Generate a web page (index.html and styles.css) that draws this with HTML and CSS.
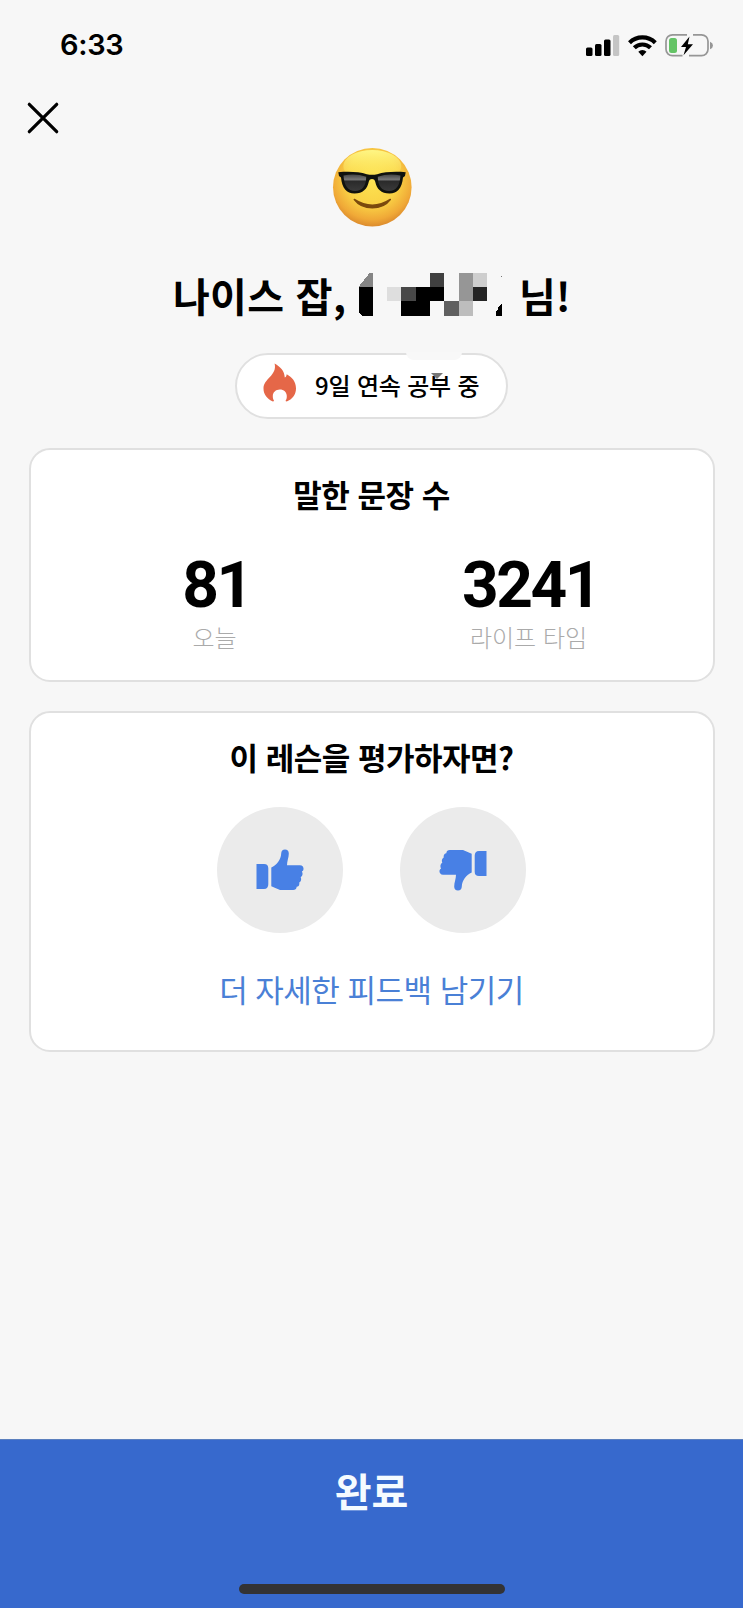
FILE: index.html
```html
<!DOCTYPE html>
<html lang="ko">
<head>
  <meta charset="UTF-8">
  <title>레슨 완료</title>
  <link rel="stylesheet" href="styles.css">
</head>
<body>
  <div class="status">
    <span class="time">6:33</span>
    <svg class="status-icons" viewBox="0 0 130 26" width="130" height="26">
      <rect x="1" y="15.500" width="6.500" height="8.500" rx="1.500"/>
      <rect x="10" y="12" width="6.500" height="12" rx="1.500"/>
      <rect x="19" y="7.500" width="6.500" height="16.500" rx="1.500"/>
      <rect x="28" y="3" width="6.200" height="21" rx="1.500" fill="#c5c5c5"/>
      <g fill="none" stroke="#000" stroke-width="4.200">
        <path d="M44.500 10.700a18.500 18.500 0 0 1 25.800 0"/>
        <path d="M49.300 15.800a11.600 11.600 0 0 1 16.200 0"/>
      </g>
      <path d="M53.300 19.700a6 6 0 0 1 8.200 0l-4.100 4.600z"/>
      <path d="M102 2.800h-14.500a6.500 6.500 0 0 0-6.500 6.500v7.900a6.500 6.500 0 0 0 6.500 6.500h10M108 2.800h8.500a6.500 6.500 0 0 1 6.500 6.500v7.900a6.500 6.500 0 0 1-6.500 6.500h-12.500" fill="none" stroke="#969696" stroke-width="1.700"/>
      <path d="M125 9.800q3 1.200 3 3.700t-3 3.700z" fill="#969696"/>
      <rect x="84" y="6" width="8" height="15" rx="2.500" fill="#64c466"/>
      <path d="M104.500 4.500L96 15h5l-2.500 8.300L108 12.300h-5.200z"/>
    </svg>
  </div>

  <button class="close">
    <svg viewBox="0 0 32 32" width="32" height="32"><path d="M2.300 2.300l27.400 27.400M29.700 2.300L2.300 29.700" fill="none" stroke="#000" stroke-width="3.200" stroke-linecap="round"/></svg>
  </button>

  <svg class="emoji" viewBox="0 0 80 80" width="80" height="80">
    <defs>
      <radialGradient id="face" cx=".5" cy=".4" r=".6">
        <stop offset="0" stop-color="#fde352"/>
        <stop offset=".55" stop-color="#fad245"/>
        <stop offset=".85" stop-color="#f0a937"/>
        <stop offset="1" stop-color="#dc8b2d"/>
      </radialGradient>
      <linearGradient id="shine" x1="0" y1="0" x2="0" y2="1">
        <stop offset="0" stop-color="#fffb8c" stop-opacity=".9"/>
        <stop offset="1" stop-color="#ffed63" stop-opacity="0"/>
      </linearGradient>
      <linearGradient id="lens" x1="0" y1="0" x2="0" y2="1">
        <stop offset="0" stop-color="#444"/>
        <stop offset=".3" stop-color="#777"/>
        <stop offset=".42" stop-color="#2b2b2b"/>
        <stop offset="1" stop-color="#3a3a3a"/>
      </linearGradient>
    </defs>
    <circle cx="40.300" cy="40.200" r="39.300" fill="url(#face)"/>
    <ellipse cx="40.300" cy="19" rx="29" ry="16" fill="url(#shine)"/>
    <path d="M6.300 25.300c11-1 21-.3 28.500 1.900q5.200 1.200 10.400 0c7.500-2.200 17.500-2.900 28.500-1.900L73 29l-2 1.500C70 41 65.500 46.500 57.500 46.500c-8.500 0-12.700-4.700-14.200-11.500-.5-2-1.300-3-3.300-3s-2.800 1-3.300 3C35.200 41.800 31 46.500 22.500 46.500 14.500 46.500 10 41 9 30.500L7 29z" fill="#10120e"/>
    <path d="M11.500 28.500q12-2.600 22.700 1.300c0 9.200-4 14.200-11.200 14.200s-10.800-5.200-11.500-15.500z" fill="url(#lens)"/>
    <path d="M68.500 28.500q-12-2.600-22.700 1.300c0 9.200 4 14.200 11.200 14.200s10.800-5.200 11.500-15.500z" fill="url(#lens)"/>
    <path d="M22.300 52.500Q40.300 64 58.300 52.500 52 60.800 40.300 60.800T22.300 52.500z" fill="#7b4a0e" stroke="#7b4a0e" stroke-width="1.500" stroke-linejoin="round"/>
  </svg>

  <h1>
    <span class="praise">나이스 잡,</span>
    <svg class="mosaic" viewBox="0 0 144 44" width="144" height="44" shape-rendering="crispEdges">
      <path d="M.500 15L12 .500h2.700V15z" fill="#858585"/>
      <path d="M.500 15h14.200v28.600H4L.500 40z"/>
      <path d="M29 15h14.400v14.300H29z" fill="#dedede"/>
      <path d="M43.400 15h14.300v14.300H43.400z" fill="#484848"/>
      <path d="M57.700 15H86.300v14.300H72v14.300H43.400V29.300h14.300z"/>
      <path d="M72 .500h14.300V15H72z" fill="#404040"/>
      <path d="M86.300 29.300h14.400v14.300H86.300z" fill="#606060"/>
      <path d="M100.700.500H115v28.800h-14.300z" fill="#969696"/>
      <path d="M100.700 29.300H115v14.300h-14.300z" fill="#bdbdbd"/>
      <path d="M115 .500h14.300V15H115z" fill="#cecece"/>
      <path d="M115 15h14.300v14.300H115z" fill="#242424"/>
      <path d="M138 43.600V39l2-2v-2l3.500-3.500v12.100z"/>
      <path d="M142.500 4h1v1h-1z" fill="#777"/>
    </svg>
    <span class="suffix">님!</span>
  </h1>

  <div class="streak">
    <svg class="flame" viewBox="0 0 34 39" width="34" height="39">
      <path d="M11.600.500C17.500 3.800 21.500 8 21.800 14.500c1.300-.5 1.700-1.800 1.900-3.300C29 14 33 18.500 33 25.500c0 6-3.700 10.800-9.300 13l-1.200-.5c1-1.500 1.300-3 1.300-5 0-4-3-6.600-7-6.600s-7 2.800-7 6.700c0 2 .4 3.400 1.300 4.900l-1.200.5C4.200 36 .5 31.500.5 25.500.5 15.500 14.500 12.500 11.600.500z" fill="#e56748"/>
    </svg>
    <span class="days">9일 연속 공부 중</span>
    <i class="smudge"></i>
    <i class="notch"></i>
  </div>

  <div class="card stats">
    <h2>말한 문장 수</h2>
    <div class="counts">
      <div class="count">
        <strong>81</strong>
        <small>오늘</small>
      </div>
      <div class="count">
        <strong>3241</strong>
        <small>라이프 타임</small>
      </div>
    </div>
  </div>

  <div class="card rating">
    <h2>이 레슨을 평가하자면?</h2>
    <div class="thumbs">
      <button class="thumb">
        <svg viewBox="0 0 48 42" width="48" height="42">
          <path id="hand" d="M.500 15H8q4.300 0 4.300 4.300v16q0 4.700-4.300 4.700H.500zM15.300 18.500c5.200-2.200 9.700-8 9.900-14C25.300 2 26.600.500 29 .500s3.800 1.600 3.800 4C32.800 8.500 31 12 31 16.300h13c4 0 4.600 5 1.900 6.200 1.300 2.200.6 4.700-1.200 5.700 1 2.300.2 4.300-1.500 5.300.6 2.400-.7 4-2.500 4.300-.2 2.200-1.500 3.200-3.500 3.200H24l-8.700-3.700z" fill="#4880e5"/>
        </svg>
      </button>
      <button class="thumb">
        <svg viewBox="0 0 48 42" width="48" height="42"><use href="#hand" transform="rotate(180 24 21)"/></svg>
      </button>
    </div>
    <a class="feedback">더 자세한 피드백 남기기</a>
  </div>

  <footer>
    <span class="done">완료</span>
    <div class="home"></div>
  </footer>
</body>
</html>
```
FILE: styles.css
```css
* {
  box-sizing: border-box;
}
body {
  margin: 0;
  height: 1608px;
  display: flex;
  flex-direction: column;
  align-items: center;
  background: #f7f7f7;
  color: #000;
  font-family: "Noto Sans CJK KR", sans-serif;
}
h1, h2 {
  margin: 0;
}
button {
  border: none;
  padding: 0;
  background: none;
  cursor: pointer;
}
svg {
  display: block;
  flex: none;
}
.status {
  width: 100%;
  height: 88px;
  padding: 1px 28px 0 60px;
  display: flex;
  justify-content: space-between;
  align-items: center;
}
.time {
  font: 600 29px/36px Inter, sans-serif;
  letter-spacing: -0.3px;
}
.close {
  align-self: flex-start;
  margin: 14px 0 0 27px;
  height: 32px;
}
.emoji {
  margin: 13px 0 0 1px;
}
h1 {
  width: 100%;
  height: 60px;
  margin-top: 38px;
  padding-left: 173px;
  display: flex;
  align-items: center;
  font-size: 40px;
  line-height: 60px;
  font-weight: 700;
  white-space: nowrap;
}
.praise {
  width: 185px;
  letter-spacing: 0.3px;
}
.mosaic {
  margin-top: -2px;
}
.suffix {
  margin-left: 17px;
}
.streak {
  position: relative;
  width: 273px;
  height: 66px;
  margin-top: 28px;
  padding-left: 26px;
  display: flex;
  align-items: center;
  gap: 18px;
  border: 2px solid #e0e0e0;
  border-radius: 33px;
  background: #fff;
  font-size: 24px;
  font-weight: 500;
  white-space: nowrap;
}
.flame {
  margin-top: -7px;
}
.days {
  margin-top: -4px;
  letter-spacing: -0.2px;
}
.notch {
  position: absolute;
  left: 169px;
  top: -3px;
  width: 56px;
  height: 8px;
  border-radius: 0 0 10px 10px;
  background: #f8f8f8;
}
.smudge {
  position: absolute;
  left: 194px;
  top: 18px;
  border: 6px solid transparent;
  border-top-color: #777;
  border-bottom: none;
}
.card {
  width: 686px;
  display: flex;
  flex-direction: column;
  align-items: center;
  border: 2px solid #e0e0e0;
  border-radius: 21px;
  background: #fff;
}
.card h2 {
  font-size: 31px;
  line-height: 46px;
  font-weight: 700;
  letter-spacing: -0.5px;
}
.stats {
  height: 234px;
  margin-top: 29px;
  padding-top: 21px;
}
.counts {
  width: 628px;
  margin-top: 35px;
  display: grid;
  grid-template-columns: 1fr 1fr;
}
.count {
  display: flex;
  flex-direction: column;
  align-items: center;
}
.count strong {
  padding-left: 4px;
  font-family: Roboto, sans-serif;
  font-size: 64px;
  line-height: 68px;
  letter-spacing: -2.5px;
}
.count small {
  margin-top: -1px;
  font-size: 24px;
  line-height: 36px;
  font-weight: 300;
  color: #aaa;
}
.rating {
  height: 341px;
  margin-top: 29px;
  padding-top: 21px;
}
.thumbs {
  margin-top: 27px;
  display: flex;
  gap: 57px;
}
.thumb {
  width: 126px;
  height: 126px;
  display: flex;
  justify-content: center;
  align-items: center;
  border-radius: 50%;
  background: #ebebeb;
}
.feedback {
  margin-top: 33px;
  font-size: 31px;
  line-height: 46px;
  letter-spacing: -0.5px;
  color: #4a80d6;
}
footer {
  width: 100%;
  height: 169px;
  margin-top: auto;
  padding: 20px 0 14px;
  display: flex;
  flex-direction: column;
  justify-content: space-between;
  align-items: center;
  border-top: 1px solid #5c80be;
  background: #3769cd;
}
.done {
  color: #f5fbff;
  font-size: 40px;
  line-height: 60px;
  font-weight: 700;
}
.home {
  width: 266px;
  height: 10px;
  border-radius: 5px;
  background: #333335;
}
```
